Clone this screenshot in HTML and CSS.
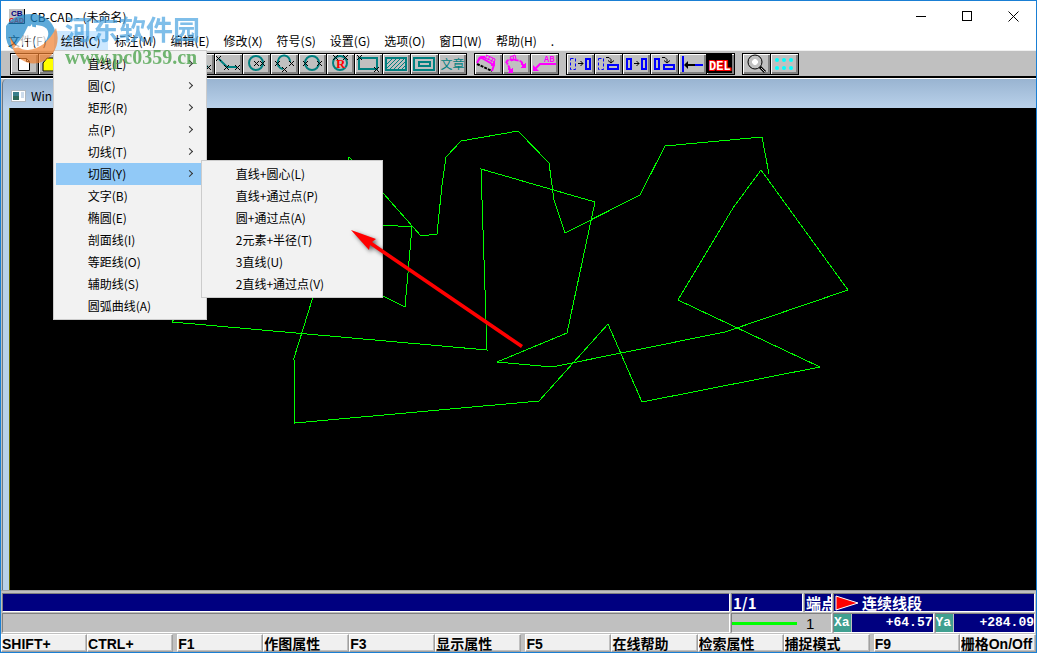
FILE: index.html
```html
<!DOCTYPE html>
<html lang="zh-CN">
<head>
    <meta charset="UTF-8">
    <meta name="viewport" content="width=device-width, initial-scale=1.0">
    <title>CB-CAD - (未命名)</title>
    <link rel="stylesheet" href="styles.css">
</head>
<body>
    <svg class="defs" width="0" height="0">
        <symbol id="mark" viewBox="0 0 5 5">
            <path d="M0 0h1v1h1v1h1v-1h1v-1h1v1h-1v1h-1v1h1v1h1v1h-1v-1h-1v-1h-1v1h-1v1h-1v-1h1v-1h1v-1h-1v-1h-1z" fill="#000"/>
        </symbol>
    </svg>

    <div class="window">
        <header class="titlebar">
            <svg class="app-icon" width="16" height="15">
                <rect width="16" height="15" fill="#c0c0c0"/>
                <path d="M15.500 0v14.500H0" fill="none" stroke="#000"/>
                <text x="2" y="7" font-size="8" font-weight="bold" fill="#000080">CB</text>
                <text x="0" y="14" font-size="7" font-weight="bold" fill="#e00000">CAD</text>
            </svg>
            <h1 class="title">CB-CAD - (未命名)</h1>
            <button class="win-btn" aria-label="最小化"><svg width="11" height="11"><path d="M0 5.500h10" stroke="#000"/></svg></button>
            <button class="win-btn" aria-label="最大化"><svg width="11" height="11"><rect x=".5" y=".5" width="9" height="9" fill="none" stroke="#000"/></svg></button>
            <button class="win-btn" aria-label="关闭"><svg width="11" height="11"><path d="M.5.5l10 10M10.500.5l-10 10" stroke="#000"/></svg></button>
        </header>

        <nav class="menubar">
            <button class="menu-btn">文件(F)</button>
            <div class="menu-wrap">
                <button class="menu-btn open">绘图(C)</button>
                <ul class="menu dropdown">
                    <li><button class="item">直线(L)<span class="chev"></span></button></li>
                    <li><button class="item">圆(C)<span class="chev"></span></button></li>
                    <li><button class="item">矩形(R)<span class="chev"></span></button></li>
                    <li><button class="item">点(P)<span class="chev"></span></button></li>
                    <li><button class="item">切线(T)<span class="chev"></span></button></li>
                    <li>
                        <button class="item selected">切圆(Y)<span class="chev"></span></button>
                        <ul class="menu submenu">
                            <li><button class="item">直线+圆心(L)</button></li>
                            <li><button class="item">直线+通过点(P)</button></li>
                            <li><button class="item">圆+通过点(A)</button></li>
                            <li><button class="item">2元素+半径(T)</button></li>
                            <li><button class="item">3直线(U)</button></li>
                            <li><button class="item">2直线+通过点(V)</button></li>
                        </ul>
                    </li>
                    <li><button class="item">文字(B)</button></li>
                    <li><button class="item">椭圆(E)</button></li>
                    <li><button class="item">剖面线(I)</button></li>
                    <li><button class="item">等距线(O)</button></li>
                    <li><button class="item">辅助线(S)</button></li>
                    <li><button class="item">圆弧曲线(A)</button></li>
                </ul>
            </div>
            <button class="menu-btn">标注(M)</button>
            <button class="menu-btn">编辑(E)</button>
            <button class="menu-btn">修改(X)</button>
            <button class="menu-btn">符号(S)</button>
            <button class="menu-btn">设置(G)</button>
            <button class="menu-btn">选项(O)</button>
            <button class="menu-btn">窗口(W)</button>
            <button class="menu-btn">帮助(H)</button>
            <button class="menu-btn">.</button>
        </nav>

        <div class="toolbar">
            <div class="group">
                <button class="tool" aria-label="新建"><svg width="27" height="20"><path d="M7.500 4.500h8l3 3v9h-11z" fill="#fff" stroke="#000"/><path d="M15.500 4.500v3h3" fill="none" stroke="#000"/></svg></button>
                <button class="tool" aria-label="打开"><svg width="27" height="20"><path d="M4 17v-8l4-5h6l2 3h7v10z" fill="#ff0" stroke="#000"/></svg></button>
                <button class="tool" aria-label="保存"></button>
            </div>
            <div class="group">
                <button class="tool" aria-label="直线"></button>
                <button class="tool" aria-label="水平线"></button>
                <button class="tool" aria-label="垂直线"></button>
                <button class="tool" aria-label="线段">
                    <svg width="27" height="20"><path d="M4 4l17 9" stroke="#008080" stroke-width="2"/><use href="#mark" x="19" y="11" width="5" height="5"/></svg>
                </button>
                <button class="tool" aria-label="连续线段">
                    <svg width="27" height="20"><path d="M4 5l8 8h10" fill="none" stroke="#008080" stroke-width="2"/><use href="#mark" x="1" y="2" width="5" height="5"/><use href="#mark" x="9" y="11" width="5" height="5"/><use href="#mark" x="20" y="11" width="5" height="5"/></svg>
                </button>
                <button class="tool" aria-label="圆">
                    <svg width="27" height="20"><circle cx="13" cy="9" r="7" fill="none" stroke="#008080" stroke-width="2"/><use href="#mark" x="11" y="7" width="5" height="5"/><use href="#mark" x="17" y="7" width="5" height="5"/></svg>
                </button>
                <button class="tool" aria-label="圆弧">
                    <svg width="27" height="20"><path d="M12 15a7 6 0 0 1-5-8a6 6 0 0 1 12 1" fill="none" stroke="#008080" stroke-width="2"/><use href="#mark" x="4" y="7" width="5" height="5"/><use href="#mark" x="18" y="7" width="5" height="5"/><use href="#mark" x="11" y="13" width="5" height="5"/></svg>
                </button>
                <button class="tool" aria-label="两点圆">
                    <svg width="27" height="20"><circle cx="13" cy="9" r="7" fill="none" stroke="#008080" stroke-width="2"/><use href="#mark" x="4" y="7" width="5" height="5"/><use href="#mark" x="18" y="7" width="5" height="5"/></svg>
                </button>
                <button class="tool" aria-label="半径圆">
                    <svg width="27" height="20"><circle cx="13" cy="9" r="7" fill="none" stroke="#008080" stroke-width="2"/><use href="#mark" x="6" y="1" width="5" height="5"/><use href="#mark" x="16" y="1" width="5" height="5"/><text x="9" y="14" class="radius">R</text></svg>
                </button>
                <button class="tool" aria-label="矩形">
                    <svg width="27" height="20"><rect x="4" y="4" width="18" height="11" fill="none" stroke="#008080" stroke-width="2"/><use href="#mark" x="2" y="1" width="5" height="5"/><use href="#mark" x="19" y="13" width="5" height="5"/></svg>
                </button>
                <button class="tool" aria-label="剖面线">
                    <svg width="27" height="20"><rect x="3" y="4" width="20" height="12" fill="none" stroke="#008080" stroke-width="2"/><path d="M4 10l6-6M4 14l10-10M7 15l11-11M11 15l11-11M15 15l7-7M19 15l3-3" stroke="#008080"/></svg>
                </button>
                <button class="tool" aria-label="等距线">
                    <svg width="27" height="20"><rect x="3" y="4" width="20" height="12" fill="none" stroke="#008080" stroke-width="2"/><rect x="8" y="8" width="11" height="4" fill="none" stroke="#008080" stroke-width="2"/></svg>
                </button>
                <button class="tool text-tool">文章</button>
            </div>
            <div class="group">
                <button class="tool" aria-label="长度标注">
                    <svg width="27" height="20" fill="none" stroke="#f0f"><path d="M2 10l15 7" stroke="#000" stroke-width="2" stroke-dasharray="3 1"/><path d="M2 9l3-6M3 7l3-4 4 0M5 3l14 8M19 11l-2 6M16 11l3 0 0-3" stroke-width="2"/><path d="M11 1l9 4M10 4l10 4M12 1l-2 4M15 2l-2 4M18 4l-2 4M20 5l-1 5"/></svg>
                </button>
                <button class="tool" aria-label="角度标注">
                    <svg width="27" height="20" fill="none" stroke="#f0f"><path d="M7 15l-3-6M3 9c1-3 3-4 9-3s7 1 8 5" stroke-width="2" stroke-dasharray="4 1"/><path d="M7 3l5-2M8 7l5-2M7 3l2 4M10 2l1 4M12 1l1 4"/><use href="#mark" x="5" y="14" width="5" height="5"/><use href="#mark" x="18" y="9" width="5" height="5"/></svg>
                </button>
                <button class="tool" aria-label="引线">
                    <svg width="27" height="20"><path d="M3 16l6-6h16" fill="none" stroke="#f0f" stroke-width="2"/><path d="M2 11v6h6z" fill="#f0f"/><text x="13" y="8" font-size="8" font-weight="bold" fill="#f0f">AB</text></svg>
                </button>
            </div>
            <div class="group">
                <button class="tool" aria-label="移动">
                    <svg width="27" height="20" fill="none"><rect x="3.500" y="4.500" width="5" height="11" stroke="#00f" stroke-dasharray="3 2"/><path d="M11 9.500h5M13.500 7l2.500 2.500-2.500 2.500" stroke="#000"/><rect x="19" y="5" width="4" height="10" stroke="#00f" stroke-width="2"/></svg>
                </button>
                <button class="tool" aria-label="旋转移动">
                    <svg width="27" height="20" fill="none"><rect x="3.500" y="4.500" width="5" height="11" stroke="#00f" stroke-dasharray="3 2"/><path d="M11 3.500h3l2 2v3M13 6.500l3 2.500 3-2.500" stroke="#000"/><rect x="13" y="11" width="10" height="4" stroke="#00f" stroke-width="2"/></svg>
                </button>
                <button class="tool" aria-label="复制">
                    <svg width="27" height="20" fill="none"><rect x="4" y="5" width="4" height="10" stroke="#00f" stroke-width="2"/><path d="M11 9.500h5M13.500 7l2.500 2.500-2.500 2.500" stroke="#000"/><rect x="19" y="5" width="4" height="10" stroke="#00f" stroke-width="2"/></svg>
                </button>
                <button class="tool" aria-label="旋转复制">
                    <svg width="27" height="20" fill="none"><rect x="4" y="5" width="4" height="10" stroke="#00f" stroke-width="2"/><path d="M11 3.500h3l2 2v3M13 6.500l3 2.500 3-2.500" stroke="#000"/><rect x="13" y="11" width="10" height="4" stroke="#00f" stroke-width="2"/></svg>
                </button>
                <button class="tool" aria-label="延伸">
                    <svg width="27" height="20"><path d="M4 2v16M16 11h8" stroke="#00f" stroke-width="2"/><path d="M7 11h9" stroke="#000" stroke-width="2"/><path d="M5 11l4-4v8z"/></svg>
                </button>
                <button class="tool" aria-label="删除">
                    <svg width="27" height="20"><rect width="25" height="19"/><text x="2" y="16" class="del">DEL</text></svg>
                </button>
            </div>
            <div class="group">
                <button class="tool" aria-label="放大">
                    <svg width="27" height="20"><circle cx="12" cy="8" r="7" fill="#c0c0c0" stroke="#000"/><path d="M12 5v6M9 8h6M10 6l4 4M14 6l-4 4" stroke="#fff" stroke-width="2"/><path d="M17 13l5 5" stroke="#000" stroke-width="3"/><path d="M18 14l4 4" stroke="#c0c0c0"/></svg>
                </button>
                <button class="tool" aria-label="栅格">
                    <svg width="27" height="20" fill="#0ff"><circle cx="6" cy="6" r="2"/><circle cx="13" cy="6" r="2"/><circle cx="20" cy="6" r="2"/><circle cx="6" cy="14" r="2"/><circle cx="13" cy="14" r="2"/><circle cx="20" cy="14" r="2"/></svg>
                </button>
            </div>
        </div>

        <main class="child">
            <div class="child-title">
                <svg width="15" height="12"><rect x=".5" y=".5" width="14" height="11" fill="#fff" stroke="#b0b8c0"/><rect x="2" y="2" width="6" height="8" fill="#3a7f8c"/><rect x="2" y="6" width="6" height="4" fill="#2f6a5a"/><path d="M10 3h3M10 5h3M10 7h3" stroke="#9ab8d8"/></svg>
                <span>Win</span>
            </div>
            <div class="canvas">
                <svg class="drawing" viewBox="10 108 1026 483" preserveAspectRatio="xMinYMin meet">
                    <polyline points="172,322 487,350 481,169 595,202 567,333 497,362 552,367 725,332 848,290 761,170 733,208 678,300 820,367 642,402 608,324 539,401 295,423 294,358 313,297 349,157 383,193 421,236 437,234 442,185 446,157 461,141 518,131 549,163 554,200 565,233 640,195 665,146 762,137 769,174"/>
                    <polyline points="172,322 240,218 383,225 412,227 405,307 383,296"/>
                </svg>
            </div>
        </main>

        <footer class="status">
            <div class="cell navy"></div>
            <div class="cell navy">1/1</div>
            <div class="cell navy">端点</div>
            <div class="cell navy command">
                <svg width="25" height="16"><path d="M1 1l22 7-22 7z" fill="#f00" stroke="#fff"/></svg>
                连续线段
            </div>
            <div class="cell"></div>
            <div class="cell linetype"><span class="sample"></span>1</div>
            <div class="coords">
                <div class="cell coord"><span class="axis">Xa</span><output>+64.57</output></div>
                <div class="cell coord"><span class="axis">Ya</span><output>+284.09</output></div>
            </div>
        </footer>

        <div class="fkeys">
            <button>SHIFT+</button>
            <button>CTRL+</button>
            <button class="next">F1</button>
            <button>作图属性</button>
            <button>F3</button>
            <button>显示属性</button>
            <button class="next">F5</button>
            <button>在线帮助</button>
            <button>检索属性</button>
            <button>捕捉模式</button>
            <button class="next">F9</button>
            <button class="last">栅格On/Off</button>
        </div>

        <svg class="arrow" width="190" height="134">
            <path d="M1 9l25 9-4 3 151 103-2 3-151-103-1 5z" fill="#f00"/>
        </svg>

        <div class="watermark">
            <svg width="56" height="56">
                <path d="M0 14Q8 1 28 2Q48 5 50 24Q48 36 38 38Q40 24 34 16L22 14L10 38Q2 38 0 26z" fill="#1b87c9"/>
                <path d="M50 16Q56 36 40 48Q26 56 13 46Q5 38 4 24Q10 38 22 38Q40 36 50 16z" fill="#f08030"/>
                <path d="M8 36L26 12L28 34L22 35L22 26L15 35z" fill="#fff"/>
                <path d="M30 13Q44 14 42 24Q40 32 30 35z" fill="#fff"/>
            </svg>
            <div>
                <p class="wm-name">河东软件园</p>
                <p class="wm-url">www.pc0359.cn</p>
            </div>
        </div>
    </div>
</body>
</html>
```

FILE: styles.css
```css
* {
    box-sizing: border-box;
}

body {
    margin: 0;
    font-family: "Noto Sans CJK SC", sans-serif;
    font-size: 12px;
    color: #000;
}

button {
    font: inherit;
    color: inherit;
    border: none;
    background: none;
    padding: 0;
    margin: 0;
}

ul, h1, p {
    margin: 0;
    padding: 0;
    list-style: none;
}

.defs {
    position: absolute;
}

#mark {
    shape-rendering: crispEdges;
}

.window {
    position: relative;
    display: flex;
    flex-direction: column;
    height: 100vh;
    border: 1px solid #1a7fd4;
    background: #c0c0c0;
    overflow: hidden;
}

/* title bar */
.titlebar {
    display: flex;
    align-items: center;
    height: 30px;
    padding-left: 8px;
    background: #fff;
}

.app-icon {
    font-family: "Liberation Sans", sans-serif;
}

.title {
    flex: 1;
    margin-left: 5px;
    font-size: 12px;
    font-weight: normal;
}

.win-btn {
    display: flex;
    align-items: center;
    justify-content: center;
    width: 46px;
    height: 28px;
}

/* menus */
.menubar {
    display: flex;
    height: 19px;
    background: #fff;
}

.menu-wrap {
    position: relative;
}

.menu-btn {
    height: 19px;
    padding: 0 7px;
    line-height: 18px;
    white-space: nowrap;
}

.menu-btn.open {
    background: #cce8ff;
}

.menu {
    position: absolute;
    z-index: 2;
    padding: 2px;
    border: 1px solid #ccc;
    background: #f2f2f2;
}

.dropdown {
    top: 19px;
    left: -1px;
    width: 154px;
}

.dropdown li {
    position: relative;
}

.submenu {
    top: -3px;
    left: 145px;
    width: 182px;
}

.item {
    display: flex;
    align-items: center;
    justify-content: space-between;
    width: 100%;
    height: 22px;
    padding: 0 12px 2px 32px;
    white-space: nowrap;
}

.item.selected {
    background: #91c9f7;
}

.chev {
    width: 5px;
    height: 5px;
    border-top: 1px solid #333;
    border-right: 1px solid #333;
    transform: rotate(45deg);
}

/* toolbar */
.toolbar {
    display: flex;
    gap: 7px;
    height: 29px;
    padding: 2px 9px 0;
    border-top: 1px solid #f0f0f0;
    border-bottom: 1px solid #fff;
    box-shadow: inset 0 -2px #000;
}

.group {
    display: flex;
    height: 22px;
    border: 1px solid #000;
    border-right: none;
}

.tool {
    width: 28px;
    height: 20px;
    border-right: 1px solid #000;
    box-shadow: inset 1px 1px #fff, inset -2px -2px #808080;
}

.tool svg {
    display: block;
}

.text-tool {
    color: #008080;
    line-height: 18px;
}

.radius {
    font: bold 13px "Liberation Serif", serif;
    fill: #f00;
}

.del {
    font: bold 12px "Liberation Mono", monospace;
    fill: #fff;
    stroke: #f00;
    stroke-width: 2px;
    paint-order: stroke;
}

/* drawing window */
.child {
    display: flex;
    flex: 1;
    flex-direction: column;
    min-height: 0;
    margin-left: 1px;
    padding-left: 6px;
    border-left: 1px solid #6b7885;
    border-radius: 5px 0 0 0;
    background: linear-gradient(#99b4d1, #b9d1ea 29px);
}

.child-title {
    display: flex;
    flex: none;
    align-items: center;
    gap: 5px;
    height: 29px;
    padding: 4px 0 0 2px;
}

.canvas {
    flex: 1;
    min-height: 0;
    border-left: 1px solid #6b6b00;
    background: #000;
    overflow: hidden;
}

.drawing {
    display: block;
    width: 100%;
}

.drawing polyline {
    fill: none;
    stroke: #0f0;
    shape-rendering: crispEdges;
}

/* status panel */
.status {
    display: grid;
    grid-template-columns: 1fr 72px 28px 202px;
    grid-template-rows: 19px 20px;
    gap: 1px;
    padding: 2px 1px 1px;
    border-top: 1px solid #a0a0a0;
    font-size: 15px;
    font-weight: bold;
}

.cell {
    min-width: 0;
    border: 1px solid;
    border-color: #808080 #fff #fff #808080;
    line-height: 17px;
    white-space: nowrap;
    overflow: hidden;
}

.navy {
    padding-left: 1px;
    background: #000080;
    color: #fff;
}

.command {
    display: flex;
    align-items: center;
    gap: 2px;
}

.linetype {
    display: flex;
    grid-column: span 2;
    align-items: center;
    gap: 9px;
    font-family: "Liberation Sans", sans-serif;
    font-weight: normal;
}

.sample {
    width: 65px;
    height: 3px;
    background: #0f0;
}

.coords {
    display: grid;
    grid-template-columns: 1fr 1fr;
    gap: 1px;
}

.coord {
    display: flex;
    color: #fff;
    font-family: "Liberation Mono", monospace;
    font-size: 13px;
}

.axis {
    width: 17px;
    background: #40a090;
}

.coord output {
    flex: 1;
    margin-left: 1px;
    background: #000080;
    text-align: right;
}

/* function keys */
.fkeys {
    display: flex;
    height: 18px;
}

.fkeys button {
    flex: 86 1 0;
    min-width: 0;
    padding-top: 1px;
    border: 1px solid;
    border-color: #fff #a0a0a0 #a0a0a0 #fff;
    box-shadow: inset -1px -1px #c0c0c0;
    background: #f0f0f0;
    font-family: "Liberation Sans", "Noto Sans CJK SC", sans-serif;
    font-size: 14px;
    font-weight: bold;
    line-height: 16px;
    text-align: left;
    white-space: nowrap;
    overflow: hidden;
}

.fkeys .next {
    margin-left: 4px;
}

.fkeys .last {
    flex-grow: 76;
}

/* pointer and site mark lie over the window */
.arrow {
    position: absolute;
    z-index: 3;
    top: 220px;
    left: 349px;
    filter: drop-shadow(2px 2px 2px rgba(0, 0, 0, 0.6));
    pointer-events: none;
}

.watermark {
    position: absolute;
    z-index: 4;
    top: 11px;
    left: 5px;
    display: flex;
    gap: 3px;
    opacity: 0.7;
    pointer-events: none;
}

.wm-name {
    color: #4aa3e0;
    font-size: 27px;
    font-weight: bold;
    line-height: 34px;
}

.wm-url {
    color: #3a9a3a;
    font: bold 20px/22px "Liberation Serif", serif;
}
```
